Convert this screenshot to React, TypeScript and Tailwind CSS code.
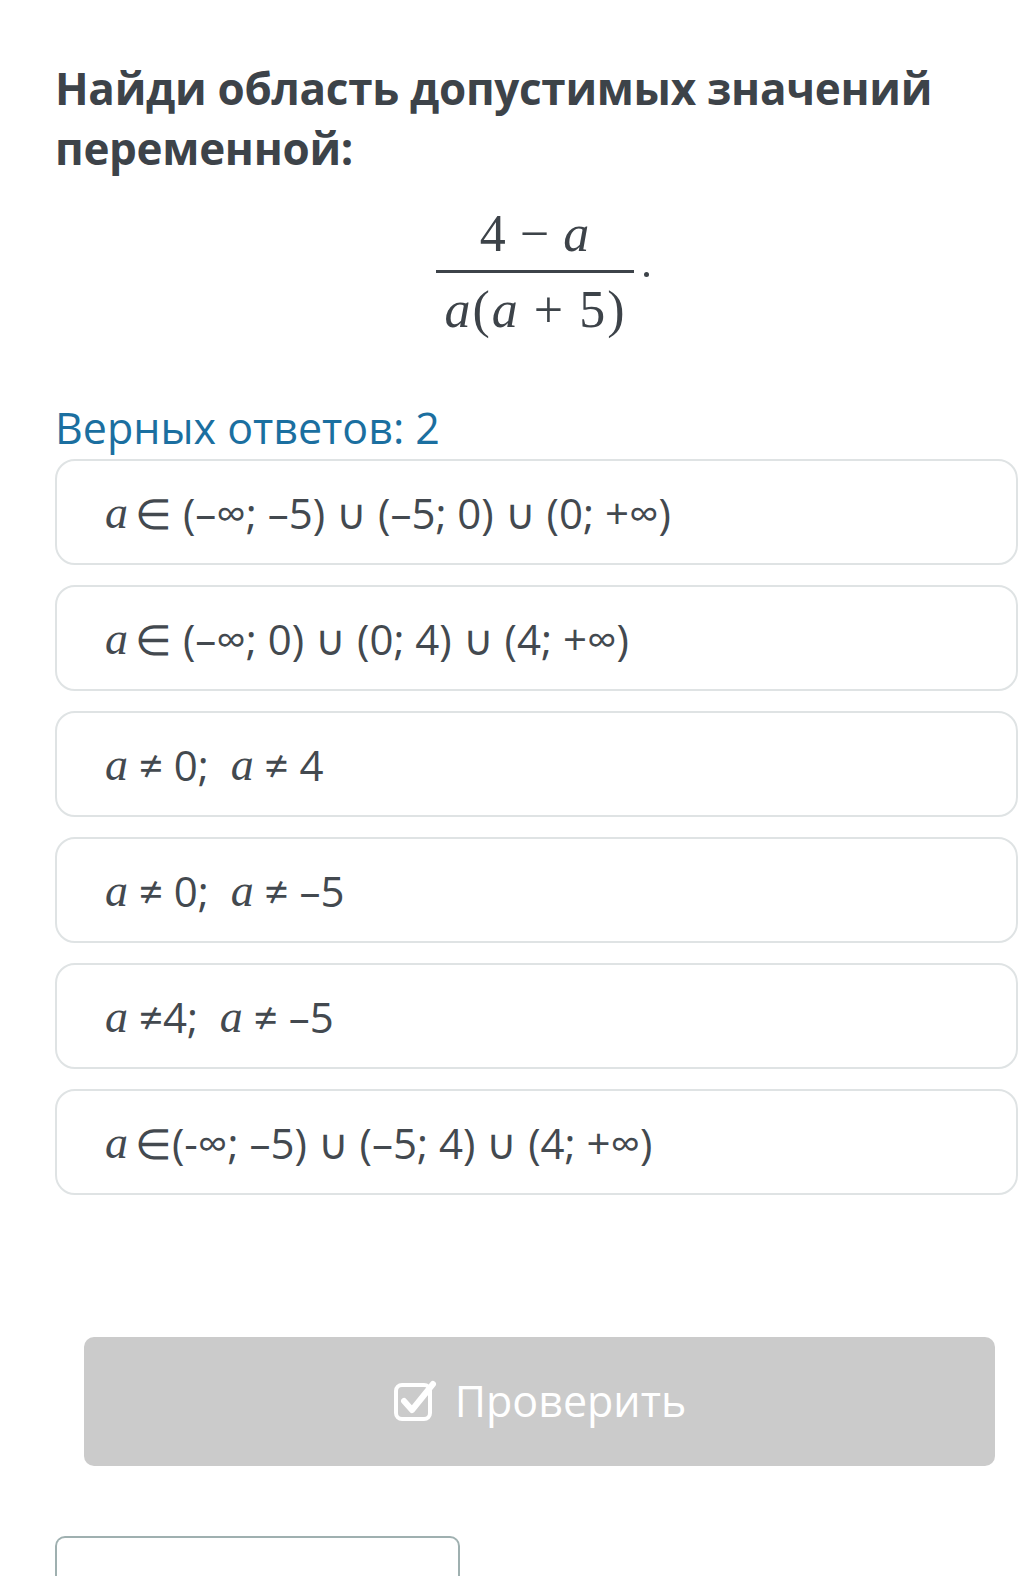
const options: { id: number; parts: (string | { v: string })[] }[] = [
  { id: 1, parts: [{ v: "a" }, "\u2009∈ (–∞; –5) ∪ (–5; 0) ∪ (0; +∞)"] },
  { id: 2, parts: [{ v: "a" }, "\u2009∈ (–∞; 0) ∪ (0; 4) ∪ (4; +∞)"] },
  { id: 3, parts: [{ v: "a" }, " ≠ 0;  ", { v: "a" }, " ≠ 4"] },
  { id: 4, parts: [{ v: "a" }, " ≠ 0;  ", { v: "a" }, " ≠ –5"] },
  { id: 5, parts: [{ v: "a" }, " ≠4;  ", { v: "a" }, " ≠ –5"] },
  { id: 6, parts: [{ v: "a" }, "\u2009∈(-∞; –5) ∪ (–5; 4) ∪ (4; +∞)"] },
];

function MathVar({ children }: { children: string }) {
  return (
    <span className="font-['Liberation_Serif','DejaVu_Serif',serif] italic text-[46px]">
      {children}
    </span>
  );
}

function CheckIcon() {
  return (
    <svg width="44" height="44" viewBox="0 0 44 44" fill="none">
      <rect x="3" y="5" width="34" height="34" rx="6" stroke="white" strokeWidth="4" />
      <path d="M11 21 L19 30 L40 4" stroke="white" strokeWidth="6" strokeLinecap="round" strokeLinejoin="round" />
    </svg>
  );
}

export default function App() {
  return (
    <div className="min-h-[1576px] bg-white font-['Open_Sans',sans-serif] text-[#3f4449] overflow-hidden">
      <div className="pl-[55px] pt-[58px]">
        <h1 className="text-[44px] font-bold leading-[60px] tracking-[-0.3px] text-[#3d4349]">
          Найди область допустимых значений
          <br />
          переменной:
        </h1>

        {/* fraction */}
        <div className="mt-[26px] flex justify-center pl-[8px] font-['Liberation_Serif','DejaVu_Serif',serif] text-[#3d4349]">
          <div className="flex items-center">
            <div className="flex flex-col items-center">
              <div className="px-[6px] text-[52px] leading-[60px]">
                4<span className="mx-[14px]">−</span><i>a</i>
              </div>
              <div className="mt-[6px] h-[3px] w-[198px] bg-[#3d4349]" />
              <div className="text-[52px] leading-[74px]">
                <i>a</i>
                <span className="ml-[2px]">(</span>
                <i className="ml-[2px]">a</i>
                <span className="mx-[16px]">+</span>5<span className="ml-[2px]">)</span>
              </div>
            </div>
            <div className="ml-[10px] mt-[-2px] h-[5px] w-[5px] rounded-full bg-[#3d4349]" />
          </div>
        </div>

        <div className="mt-[54px] text-[43px] leading-[54px] text-[#1b6fa0]">Верных ответов: 2</div>

        <div className="mt-[4px] mr-[3px] flex flex-col gap-[20px]">
          {options.map((o) => (
            <div
              key={o.id}
              className="flex h-[106px] items-center rounded-[20px] border-2 border-[#dfe3e4] pl-[48px] text-[42px] text-[#43494f]"
            >
              {o.parts.map((p, i) =>
                typeof p === "string" ? (
                  <span key={i} className="whitespace-pre">{p}</span>
                ) : (
                  <MathVar key={i}>{p.v}</MathVar>
                )
              )}
            </div>
          ))}
        </div>
      </div>

      <div className="mt-[142px] ml-[84px] mr-[26px] flex h-[129px] items-center justify-center gap-[18px] rounded-[10px] bg-[#cbcbcb] text-white">
        <CheckIcon />
        <span className="text-[43px]">Проверить</span>
      </div>

      <div className="mt-[70px] ml-[55px] h-[60px] w-[405px] rounded-t-[10px] border-2 border-b-0 border-[#9fb0b0]" />
    </div>
  );
}
